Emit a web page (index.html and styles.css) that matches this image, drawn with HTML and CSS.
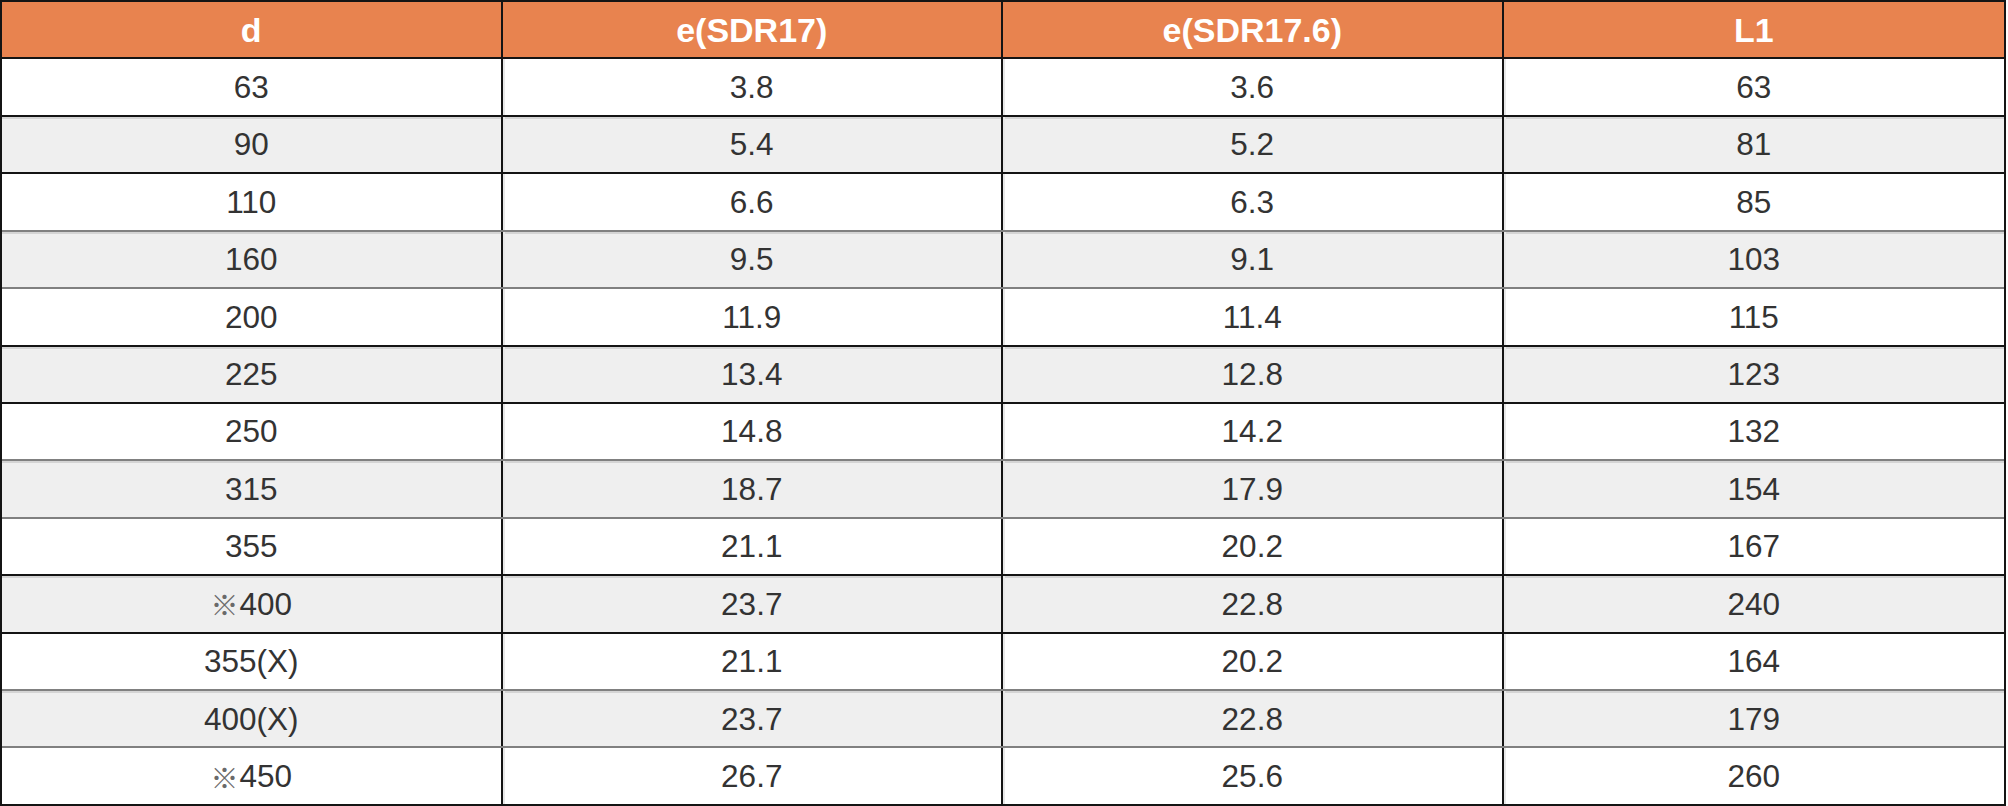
FILE: index.html
```html
<!DOCTYPE html>
<html lang="ja">
<head>
<meta charset="utf-8">
<title>SDR17 寸法表</title>
<link rel="stylesheet" href="styles.css">
</head>
<body>
<div class="table">
  <div class="row head">
    <div class="cell">d</div>
    <div class="cell">e(SDR17)</div>
    <div class="cell">e(SDR17.6)</div>
    <div class="cell">L1</div>
  </div>
  <div class="row">
    <div class="cell">63</div><div class="cell">3.8</div><div class="cell">3.6</div><div class="cell">63</div>
  </div>
  <div class="row alt">
    <div class="cell">90</div><div class="cell">5.4</div><div class="cell">5.2</div><div class="cell">81</div>
  </div>
  <div class="row light">
    <div class="cell">110</div><div class="cell">6.6</div><div class="cell">6.3</div><div class="cell">85</div>
  </div>
  <div class="row alt light">
    <div class="cell">160</div><div class="cell">9.5</div><div class="cell">9.1</div><div class="cell">103</div>
  </div>
  <div class="row">
    <div class="cell">200</div><div class="cell">11.9</div><div class="cell">11.4</div><div class="cell">115</div>
  </div>
  <div class="row alt">
    <div class="cell">225</div><div class="cell">13.4</div><div class="cell">12.8</div><div class="cell">123</div>
  </div>
  <div class="row light">
    <div class="cell">250</div><div class="cell">14.8</div><div class="cell">14.2</div><div class="cell">132</div>
  </div>
  <div class="row alt light">
    <div class="cell">315</div><div class="cell">18.7</div><div class="cell">17.9</div><div class="cell">154</div>
  </div>
  <div class="row">
    <div class="cell">355</div><div class="cell">21.1</div><div class="cell">20.2</div><div class="cell">167</div>
  </div>
  <div class="row alt">
    <div class="cell"><span class="mark">※</span>400</div><div class="cell">23.7</div><div class="cell">22.8</div><div class="cell">240</div>
  </div>
  <div class="row light">
    <div class="cell">355(X)</div><div class="cell">21.1</div><div class="cell">20.2</div><div class="cell">164</div>
  </div>
  <div class="row alt light">
    <div class="cell">400(X)</div><div class="cell">23.7</div><div class="cell">22.8</div><div class="cell">179</div>
  </div>
  <div class="row">
    <div class="cell"><span class="mark">※</span>450</div><div class="cell">26.7</div><div class="cell">25.6</div><div class="cell">260</div>
  </div>
</div>
</body>
</html>
```

FILE: styles.css
```css
html, body {
  margin: 0;
  padding: 0;
  background: #ffffff;
}

body {
  font-family: "Liberation Sans", Arial, "Noto Sans CJK JP", sans-serif;
  color: #333333;
}

.table {
  width: 2006px;
  border-top: 2px solid #141414;
  border-left: 2px solid #141414;
  border-right: 2px solid #141414;
  box-sizing: border-box;
}

.row {
  display: grid;
  grid-template-columns: 1fr 1fr 1fr 1fr;
  height: 57.43px;
  box-sizing: border-box;
  border-bottom: 2px solid #141414;
  background: #ffffff;
}

.row.alt {
  background: #efefef;
  box-shadow: inset 0 2px 0 #d4d4d4;
}

.row.light {
  border-bottom-color: #808080;
}

.cell {
  display: flex;
  align-items: center;
  justify-content: center;
  border-right: 2px solid #141414;
  font-size: 31.5px;
  line-height: 1;
  padding-top: 1px;
  box-shadow: inset 2px 0 0 #e8e8e8;
}

.cell:first-child {
  box-shadow: none;
}

.cell:last-child {
  border-right: none;
}

.head {
  background: #e8834f;
}

.head .cell {
  color: #ffffff;
  font-weight: bold;
  font-size: 34px;
  padding-top: 0;
  box-shadow: none;
}

.mark {
  font-family: "Noto Sans CJK JP", sans-serif;
  font-weight: 300;
  color: #6a6a6a;
  font-size: 28px;
  margin-right: 1px;
}
```
